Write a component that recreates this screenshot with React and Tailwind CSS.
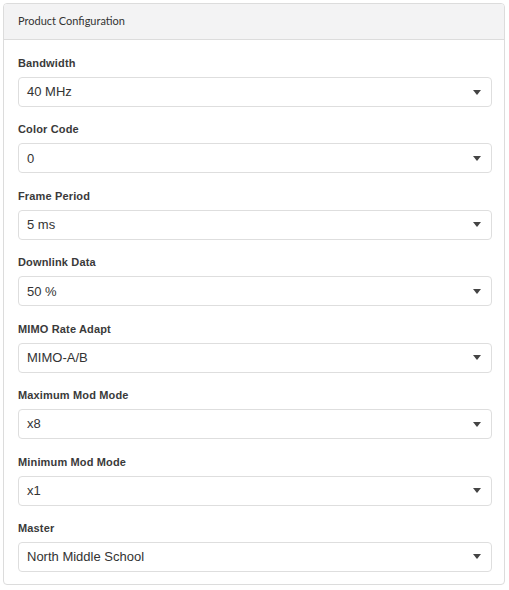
import React from "react";

const fields = [
  ["Bandwidth", "40 MHz"],
  ["Color Code", "0"],
  ["Frame Period", "5 ms"],
  ["Downlink Data", "50 %"],
  ["MIMO Rate Adapt", "MIMO-A/B"],
  ["Maximum Mod Mode", "x8"],
  ["Minimum Mod Mode", "x1"],
  ["Master", "North Middle School"],
];

function Caret() {
  return (
    <svg width="8" height="5" viewBox="0 0 8 5" className="shrink-0">
      <path d="M0 0 L8 0 L4 5 Z" fill="#444" />
    </svg>
  );
}

export default function App() {
  return (
    <div className="bg-white pt-[3px] pl-[3px] w-[509px] h-[590px]">
      <div className="w-[502px] h-[582px] border border-[#dcdcdc] rounded-[4px] overflow-hidden flex flex-col">
        <div className="h-[36px] bg-[#f3f3f4] border-b border-[#dcdcdc] flex items-center pl-[14px] text-[11px] text-[#333] font-['Lato',sans-serif]">
          Product Configuration
        </div>
        <div className="flex flex-col gap-y-[14.43px] pt-[15px] pl-[14px] pr-[12px]">
          {fields.map(([label, value]) => (
            <div key={label} className="flex flex-col">
              <div className="h-[16px] leading-[16px] mb-[6px] text-[11px] font-bold tracking-[0.15px] text-[#3a3a3a] font-['Liberation_Sans',Arial,sans-serif]">
                {label}
              </div>
              <div className="h-[30px] border border-[#dedede] rounded-[4px] flex items-center justify-between pl-[8px] pr-[10px] text-[13px] text-[#333] font-['Liberation_Sans',Arial,sans-serif]">
                <span>{value}</span>
                <Caret />
              </div>
            </div>
          ))}
        </div>
      </div>
    </div>
  );
}
